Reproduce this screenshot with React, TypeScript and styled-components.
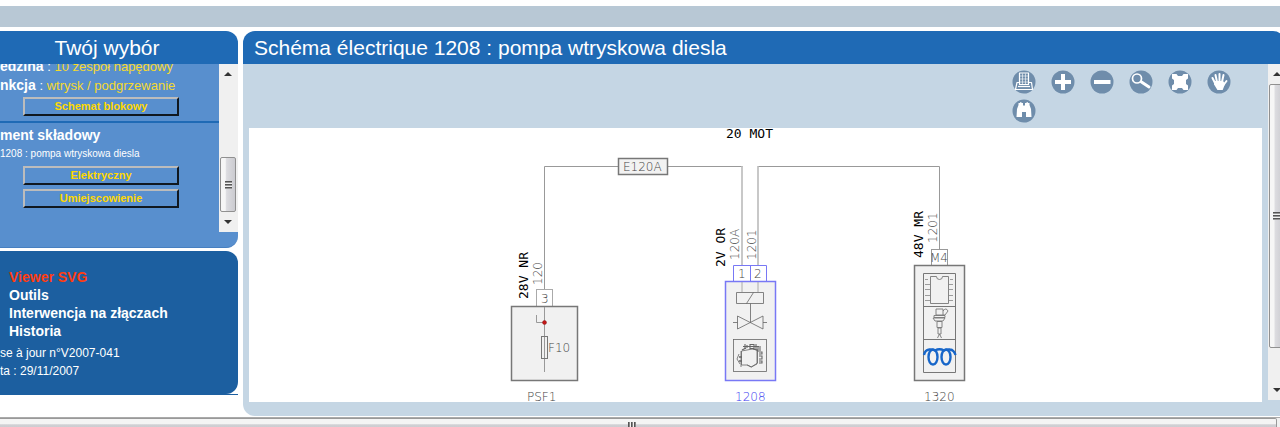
import React from "react";
import styled, { createGlobalStyle, css } from "styled-components";

const GlobalStyle = createGlobalStyle`
  *, *::before, *::after { box-sizing: border-box; }
  html, body { margin: 0; overflow: hidden; background: #fff; }
  body { font-family: "Liberation Sans", Arial, sans-serif; color: #fff; }
`;

const Page = styled.div`
  display: flex;
  flex-direction: column;
  min-height: 100vh;
  overflow: hidden;
`;

const TopBand = styled.header`
  height: 21px;
  margin: 6px 0 4px;
  background: #b8c8d5;
`;

const Columns = styled.div`
  display: grid;
  grid-template-columns: 238px minmax(0, 1fr);
  column-gap: 5px;
  margin-right: -5px;
  align-items: start;
`;

const Sidebar = styled.aside`
  display: flex;
  flex-direction: column;
  gap: 3px;
`;

const Title = styled.h1<{ $centered?: boolean }>`
  margin: 0;
  height: 33px;
  font-size: 21px;
  font-weight: 400;
  line-height: 34px;
  background: #1f6ab5;
  white-space: nowrap;
  ${(p) =>
    p.$centered
      ? css`
          padding-right: 24px;
          text-align: center;
          border-radius: 0 12px 0 0;
        `
      : css`
          padding-left: 11px;
          border-radius: 12px 12px 0 0;
        `}
`;

const ChoicePanel = styled.section`
  padding-bottom: 15px;
  background: #588fce;
  border-bottom: 1px solid #477fc0;
  border-radius: 0 0 12px 0;
`;

const ScrollArea = styled.div`
  display: flex;
  height: 168px;
  overflow: hidden;
`;

const ChoiceContent = styled.div`
  flex: 1;
  min-width: 0;
  overflow: hidden;
`;

const Group = styled.div`
  display: flex;
  flex-direction: column;
  padding-bottom: 3px;
  & + & {
    border-top: 2px solid #1f6ab5;
    padding-top: 3px;
  }
`;

const Entry = styled.p`
  margin: 0;
  font-size: 13px;
  line-height: 18px;
  white-space: nowrap;
  &:first-child { margin-top: -7px; }
`;

const Name = styled.strong`
  font-size: 14px;
`;

const Value = styled.span`
  color: #f5d92e;
`;

const PartTitle = styled.h3`
  margin: 0;
  font-size: 14px;
  line-height: 18px;
  white-space: nowrap;
`;

const PartLine = styled.p`
  margin: 0;
  font-size: 10px;
  line-height: 20px;
  white-space: nowrap;
`;

const BevelButton = styled.button`
  width: 156px;
  height: 19px;
  margin: 2px 0 2px 23px;
  padding: 0;
  border: 2px solid;
  border-color: #bcbcbc #101820 #101820 #bcbcbc;
  background: #588fce;
  color: #ffd800;
  font: bold 11px/15px "Liberation Sans", Arial, sans-serif;
`;

const InfoFrame = styled.section`
  border-bottom: 1px solid #1c5fa0;
`;

const InfoPanel = styled.div`
  height: 143px;
  padding-top: 17px;
  background: #1c5fa0;
  border-radius: 0 12px 12px 0;
`;

const Menu = styled.nav`
  display: flex;
  flex-direction: column;
  align-items: flex-start;
  padding-left: 9px;
`;

const MenuLink = styled.a<{ $active?: boolean }>`
  font-size: 14px;
  font-weight: 700;
  line-height: 18px;
  text-decoration: none;
  white-space: nowrap;
  color: ${(p) => (p.$active ? "#ff3c10" : "#fff")};
`;

const Version = styled.p`
  margin: 4px 0 0;
  font-size: 12px;
  line-height: 18px;
  white-space: nowrap;
`;

const Main = styled.main`
  min-width: 0;
`;

const MainBody = styled.div`
  display: flex;
  padding-bottom: 14px;
  background: #c5d6e4;
  border-radius: 0 0 0 12px;
`;

const Viewer = styled.div`
  flex: 1;
  min-width: 0;
  padding: 0 6px;
`;

const Toolbar = styled.div`
  display: flex;
  flex-wrap: wrap;
  align-content: flex-start;
  gap: 5px 15px;
  width: 219px;
  height: 64px;
  margin: 0 31px 0 auto;
  padding-top: 6px;
`;

const ToolButton = styled.button`
  width: 24px;
  height: 24px;
  padding: 0;
  border: 0;
  background: none;
  svg { display: block; }
`;

const Canvas = styled.div`
  background: #fff;
  svg { display: block; width: 100%; height: 274px; }
  text { font-family: "DejaVu Sans Mono", monospace; }
  .thin { font-family: "DejaVu Sans", sans-serif; font-weight: 200; }
`;

const Bar = styled.div`
  display: flex;
  flex-direction: column;
  flex: none;
  background: #f0f0f0;
`;

const SideBar = styled(Bar)`
  width: 19px;
  height: 168px;
  padding-right: 1px;
`;

const MainBar = styled(Bar)`
  width: 17px;
  height: 336px;
`;

const Arrow = styled.span<{ $down?: boolean }>`
  display: flex;
  align-items: center;
  justify-content: center;
  height: 20px;
  &::before {
    content: "";
    border: solid transparent;
    border-width: ${(p) => (p.$down ? "4px 4px 0" : "0 4px 4px")};
    border-top-color: ${(p) => (p.$down ? "#333" : "transparent")};
    border-bottom-color: ${(p) => (p.$down ? "transparent" : "#333")};
  }
`;

const Track = styled.span<{ $before: number; $after: number }>`
  display: flex;
  flex: 1;
  padding: ${(p) => p.$before}px 0 ${(p) => p.$after}px;
`;

const Thumb = styled.span`
  display: flex;
  flex: 1;
  align-items: center;
  justify-content: center;
  margin: 0 1px;
  border: 1px solid #909090;
  border-radius: 2px;
  background: linear-gradient(90deg, #f6f6f6 30%, #dcdce0 40%, #cbcbd0);
  &::before {
    content: "";
    width: 7px;
    height: 8px;
    background: repeating-linear-gradient(#555 0 1px, #999 1px 2px, #f2f2f2 2px 3px);
  }
`;

const BottomBar = styled.div`
  flex: 1;
  min-height: 10px;
  margin-top: 1px;
  overflow: hidden;
  background: #f0f0f0;
  border-top: 1px solid #aaa;
`;

const BottomThumb = styled.div`
  display: flex;
  justify-content: center;
  height: 15px;
  margin-right: 3px;
  padding: 3px 12px 0 0;
  border: 1px solid #999;
  border-left: 0;
  border-radius: 0 2px 2px 0;
  background: linear-gradient(#f4f4f4 35%, #d0d0d4 45%, #c6c6cb);
  &::before {
    content: "";
    width: 8px;
    height: 8px;
    background: repeating-linear-gradient(90deg, #555 0 1px, #888 1px 2px, #f2f2f2 2px 3px);
  }
`;

const tools: { label: string; art: React.ReactNode }[] = [
  {
    label: "Print",
    art: (
      <g fill="#6f8dab" stroke="#fff" strokeWidth="1.2" strokeLinejoin="round">
        <path d="M5 12.5h14.500l1 7h-17z" />
        <path d="M7.500 3h9v11.500h-9z" />
        <path d="M8 6h8M8 9h8M8 12h8M10.500 3.500v11M13.500 3.500v11" strokeWidth=".6" />
        <path d="M6 16.500h12" />
      </g>
    ),
  },
  { label: "Zoom in", art: <path d="M10 4h4v6h6v4h-6v6h-4v-6H4v-4h6z" fill="#fff" /> },
  { label: "Zoom out", art: <path d="M4 10h16.500v4H4z" fill="#fff" /> },
  {
    label: "Zoom area",
    art: (
      <g fill="none" stroke="#fff" strokeLinecap="round">
        <circle cx="8" cy="8.500" r="4.500" strokeWidth="1.700" />
        <path d="M12.500 12 20 17" strokeWidth="3" />
      </g>
    ),
  },
  {
    label: "Fit to window",
    art: (
      <path
        d="M4 4h4.500l1.500 2h4l1.500-2H20v4.500L18 10v4l2 1.500V20h-4.500l-1.500-2h-4l-1.500 2H4v-4.500L6 14v-4L4 8.500z"
        fill="#fff"
      />
    ),
  },
  {
    label: "Pan",
    art: (
      <g fill="none" stroke="#fff" strokeWidth="2" strokeLinecap="round">
        <path d="M8.500 14 5.500 8M10 12 8.500 5M12.500 12V4M15 12l1.500-7M16.500 15l3-4" />
        <path d="M8.500 12h7l1.500 2-2 5h-4L8 14z" fill="#fff" />
      </g>
    ),
  },
  {
    label: "Search",
    art: (
      <path
        d="M6.500 6V4h1.500v-.8h1.500V4H11v2.500h2V4h1.500v-.8H16V4h1.500v2l1.500 4 .5 8h-5.500v-5h-4v5H4.500l.5-8z"
        fill="#fff"
      />
    ),
  },
];

const Vertical = ({ x, y, children, strong }: { x: number; y: number; children: string; strong?: boolean }) => (
  <text
    className={strong ? undefined : "thin"}
    transform={`translate(${x} ${y}) rotate(-90)`}
    fontSize={strong ? 13 : 12}
    fill={strong ? "#000" : "#444"}
  >
    {children}
  </text>
);

const Schematic = () => (
  <svg viewBox="249 128 1013 274" role="img" aria-label="Schéma électrique 1208">
    <g fill="none" stroke="#999" strokeWidth="1">
      <path d="M544.500 290V166.500H618M668 166.500h74.500" />
      <path d="M758 166.500H939.500V249" />
      <path d="M742 166v100M758 266V166" stroke="#bbb" strokeWidth="1.600" />
    </g>
    <rect x="618.500" y="158.500" width="49" height="16" fill="#f2f2f2" stroke="#777" strokeWidth="1.500" />
    <g fontSize="12" fill="#444">
      <text className="thin" x="623" y="171">E120A</text>
      <text className="thin" x="527" y="401">PSF1</text>
      <text className="thin" x="735" y="401" fill="#3a3af0">1208</text>
      <text className="thin" x="924" y="401">1320</text>
    </g>
    <text x="726" y="138" fontSize="13" fill="#000">20 MOT</text>
    <Vertical x={528} y={299} strong>28V NR</Vertical>
    <Vertical x={542} y={285}>120</Vertical>
    <Vertical x={725} y={267} strong>2V OR</Vertical>
    <Vertical x={739} y={260}>120A</Vertical>
    <Vertical x={756} y={260}>1201</Vertical>
    <Vertical x={923} y={258} strong>48V MR</Vertical>
    <Vertical x={937} y={243}>1201</Vertical>

    <g fill="none" stroke="#777">
      <rect x="536.500" y="289.500" width="16" height="17" fill="#fff" stroke="#aaa" />
      <rect x="511.500" y="306.500" width="66" height="74" fill="#f1f1f1" strokeWidth="1.500" />
      <path d="M544.500 307v65M536.500 315v7.500h8" stroke="#999" />
      <rect x="541.500" y="336.500" width="6" height="22" />
      <circle cx="544.500" cy="322.500" r="2" fill="#c41616" stroke="#8c2020" strokeWidth=".5" />
    </g>
    <g fill="none" stroke="#7878f5">
      <path d="M733.500 281v-15.500h33V281M750.500 265.500V281" fill="#fff" />
      <rect x="725.500" y="281.500" width="50" height="99" fill="#f1f1f1" strokeWidth="1.500" />
    </g>
    <g fill="none" stroke="#666" strokeWidth=".8">
      <path d="M742 282v10M758 282v10" stroke="#999" />
      <path d="M736.500 292.500h27v11h-27zM746.500 303.500l7-11M750.500 303.500v19" />
      <path d="M733 322.500h4.500M763 322.500h4M737.500 316v13l25.500-13v13z" />
      <rect x="733.500" y="339.500" width="33" height="32" />
      <path d="M741.500 351l11-2 5 1v13l-6 4-4-2h-6zM741 351v16M739 354l-2 5 3 5M757 349v15M757 364l-6 3-4-2" />
      <path d="M743 346.500h16M745 344v5M747 345v3M750 344.500h4v4h-4zM756 344v5M758 347v5M760 346v5M759 352h3v2h-3M759 356h3v3h-3M759 361h3v2h-3" strokeWidth="1.100" />
      <path d="M742 350l4-2M752 348.500l6 2M739 357h3M739 361h3" strokeWidth="1.300" />
    </g>

    <g fill="none" stroke="#777">
      <rect x="931.500" y="249.500" width="16" height="16" fill="#fff" stroke="#999" />
      <rect x="914.500" y="265.500" width="50" height="115" fill="#f1f1f1" strokeWidth="1.500" />
      <path d="M923.500 273.500h32v99h-32zM923.500 306.500h32M923.500 339.500h32" />
      <path d="M930.500 276.500h6q0 3 3 3t3-3h6v27h-18z" strokeWidth=".9" />
      <path d="M925 279.500h3M925 284.500h5M925 289.500h5M925 295.500h5M925 300.500h5M950 279.500h3M949 284.500h4M949 289.500h4M949 295.500h4M949 300.500h4" strokeWidth=".7" />
      <path d="M936 309h7v6h-7zM934 315.500h11v2h-11zM933 318h12l-2 3h-8zM937 321.500h5v6h-5zM938 328h3v6h-3zM939.500 334l-2 4M939.500 334l2 4M943 311q3-4 5 0l-3 4h-2" strokeWidth=".9" />
      <g stroke="#1766c9" strokeWidth="2.400">
        <ellipse cx="933" cy="357" rx="4.500" ry="7.500" />
        <ellipse cx="946" cy="357" rx="4.500" ry="7.500" />
        <path d="M924 355q1-5 5-5.500 3-.5 6 1 4.500-2.500 9 0 3-1.500 6-1 4 .5 5.500 5.500" />
      </g>
    </g>
    <g fontSize="12" fill="#444">
      <text className="thin" x="541" y="303">3</text>
      <text className="thin" x="548" y="352">F10</text>
      <text className="thin" x="738" y="278">1</text>
      <text className="thin" x="754" y="278">2</text>
      <text className="thin" x="930" y="262">M4</text>
    </g>
  </svg>
);

export default function App() {
  return (
    <>
      <GlobalStyle />
      <Page>
        <TopBand />
        <Columns>
          <Sidebar>
            <div>
              <Title as="h2" $centered>Twój wybór</Title>
              <ChoicePanel>
                <ScrollArea>
                  <ChoiceContent>
                    <Group>
                      <Entry>
                        <Name>edzina</Name> : <Value>10 zespół napędowy</Value>
                      </Entry>
                      <Entry>
                        <Name>nkcja</Name> : <Value>wtrysk / podgrzewanie</Value>
                      </Entry>
                      <BevelButton>Schemat blokowy</BevelButton>
                    </Group>
                    <Group>
                      <PartTitle>ment składowy</PartTitle>
                      <PartLine>1208 : pompa wtryskowa diesla</PartLine>
                      <BevelButton>Elektryczny</BevelButton>
                      <BevelButton>Umiejscowienie</BevelButton>
                    </Group>
                  </ChoiceContent>
                  <SideBar aria-hidden>
                    <Arrow />
                    <Track $before={73} $after={0}><Thumb /></Track>
                    <Arrow $down />
                  </SideBar>
                </ScrollArea>
              </ChoicePanel>
            </div>
            <InfoFrame>
              <InfoPanel>
                <Menu>
                  <MenuLink href="#viewer" $active>Viewer SVG</MenuLink>
                  <MenuLink href="#outils">Outils</MenuLink>
                  <MenuLink href="#interwencja">Interwencja na złączach</MenuLink>
                  <MenuLink href="#historia">Historia</MenuLink>
                </Menu>
                <Version>
                  se à jour n°V2007-041
                  <br />
                  ta : 29/11/2007
                </Version>
              </InfoPanel>
            </InfoFrame>
          </Sidebar>
          <Main>
            <Title>Schéma électrique 1208 : pompa wtryskowa diesla</Title>
            <MainBody>
              <Viewer>
                <Toolbar role="toolbar">
                  {tools.map((tool) => (
                    <ToolButton key={tool.label} aria-label={tool.label}>
                      <svg width="24" height="24" viewBox="0 0 24 24">
                        <circle cx="12" cy="12" r="11.500" fill="#6f8dab" />
                        {tool.art}
                      </svg>
                    </ToolButton>
                  ))}
                </Toolbar>
                <Canvas><Schematic /></Canvas>
              </Viewer>
              <MainBar aria-hidden>
                <Arrow />
                <Track $before={0} $after={32}><Thumb /></Track>
                <Arrow $down />
              </MainBar>
            </MainBody>
          </Main>
        </Columns>
        <BottomBar aria-hidden><BottomThumb /></BottomBar>
      </Page>
    </>
  );
}
